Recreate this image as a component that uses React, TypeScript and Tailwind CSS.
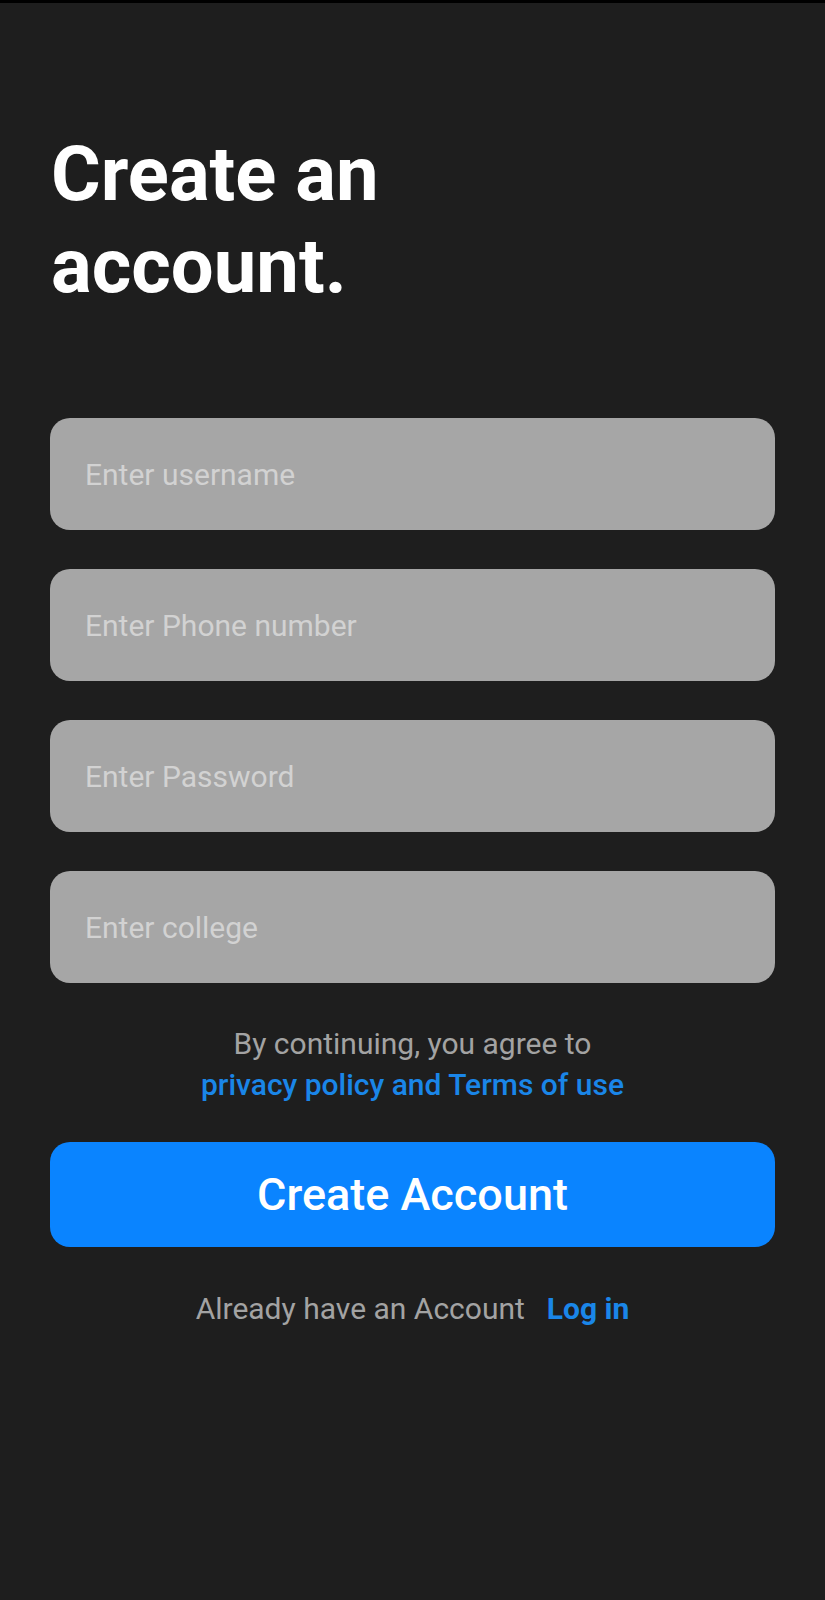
import { useState } from 'react';

const fields = [
  { name: 'username', placeholder: 'Enter username', type: 'text' },
  { name: 'phone', placeholder: 'Enter Phone number', type: 'tel' },
  { name: 'password', placeholder: 'Enter Password', type: 'password' },
  { name: 'college', placeholder: 'Enter college', type: 'text' },
];

export default function App() {
  const [values, setValues] = useState<Record<string, string>>({});

  return (
    <div className="min-h-[1600px] bg-[#1e1e1e] font-['Roboto',sans-serif]">
      {/* status bar edge */}
      <div className="h-[3px] bg-black" />

      <main className="px-[50px] pt-[125px]">
        <h1 className="pl-[1px] text-[76px] font-bold leading-[92px] text-white">
          Create an
          <br />
          account.
        </h1>

        {/* Form fields */}
        <div className="mt-[106px] flex flex-col gap-[39px]">
          {fields.map((f) => (
            <input
              key={f.name}
              type={f.type}
              value={values[f.name] ?? ''}
              onChange={(e) => setValues({ ...values, [f.name]: e.target.value })}
              placeholder={f.placeholder}
              className="h-[112px] w-full rounded-[20px] bg-[#a6a6a6] px-[35px] text-[30px] text-white outline-none placeholder:text-[#d2d2d2]"
            />
          ))}
        </div>

        {/* Terms */}
        <p className="mt-[40px] text-center text-[30px] leading-[41px] text-[#a3a3a3]">
          By continuing, you agree to
          <br />
          <a className="font-medium text-[#1a86e8]">privacy policy and Terms of use</a>
        </p>

        <button className="mt-[37px] h-[105px] w-full rounded-[20px] bg-[#0a84ff] text-[45px] font-medium text-white">
          Create Account
        </button>

        <p className="mt-[41px] text-center text-[30px] leading-[41px] text-[#a3a3a3]">
          Already have an Account
          <a className="ml-[22px] font-bold text-[#1a86e8]">Log in</a>
        </p>
      </main>
    </div>
  );
}
